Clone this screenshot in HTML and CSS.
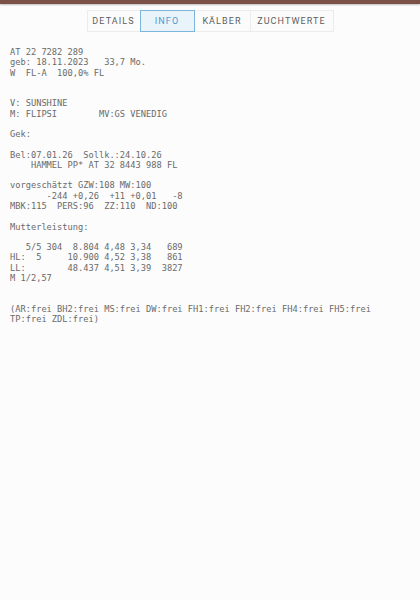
FILE: index.html
```html
<!DOCTYPE html>
<html>
<head>
<meta charset="utf-8">
<link rel="stylesheet" href="styles.css">
</head>
<body>
<div class="topbar"></div>
<nav class="tabs">
  <div class="tab">DETAILS</div>
  <div class="tab active">INFO</div>
  <div class="tab">KÄLBER</div>
  <div class="tab">ZUCHTWERTE</div>
</nav>
<pre class="info">AT 22 7282 289
geb: 18.11.2023   33,7 Mo.
W  FL-A  100,0% FL


V: SUNSHINE
M: FLIPSI        MV:GS VENEDIG

Gek:

Bel:07.01.26  Sollk.:24.10.26
    HAMMEL PP* AT 32 8443 988 FL

vorgeschätzt GZW:108 MW:100
       -244 +0,26  +11 +0,01   -8
MBK:115  PERS:96  ZZ:110  ND:100

Mutterleistung:

   5/5 304  8.804 4,48 3,34   689
HL:  5     10.900 4,52 3,38   861
LL:        48.437 4,51 3,39  3827
M 1/2,57


(AR:frei BH2:frei MS:frei DW:frei FH1:frei FH2:frei FH4:frei FH5:frei
TP:frei ZDL:frei)</pre>
</body>
</html>
```
FILE: styles.css
```css
html, body {
  margin: 0;
  padding: 0;
  background: #fcfcfc;
}
.topbar {
  height: 4px;
  background: #7b5147;
  box-shadow: 0 1px 2px rgba(0,0,0,0.25);
}
.tabs {
  display: flex;
  justify-content: center;
  margin-top: 6px;
}
.tab {
  height: 20px;
  line-height: 20px;
  border: 1px solid #ececec;
  border-right: none;
  background: #fbfbfb;
  font-family: Roboto, "Liberation Sans", sans-serif;
  font-size: 9px;
  letter-spacing: 1.1px;
  color: #5e5e5e;
  text-align: center;
  box-sizing: content-box;
}
.tab:nth-child(1) { width: 52px; }
.tab:nth-child(2) { width: 53px; }
.tab:nth-child(3) { width: 55px; }
.tab:nth-child(4) { width: 82px; border-right: 1px solid #ececec; }
.tab.active {
  border: 1px solid #7cb6dc;
  background: #e9f3fa;
  color: #4a9ad4;
}
.tab.active + .tab { border-left: none; }
.info {
  margin: 15px 0 0 10px;
  font-family: "DejaVu Sans Mono", monospace;
  font-size: 8.7px;
  line-height: 10.27px;
  color: #6a6a6a;
}
```
